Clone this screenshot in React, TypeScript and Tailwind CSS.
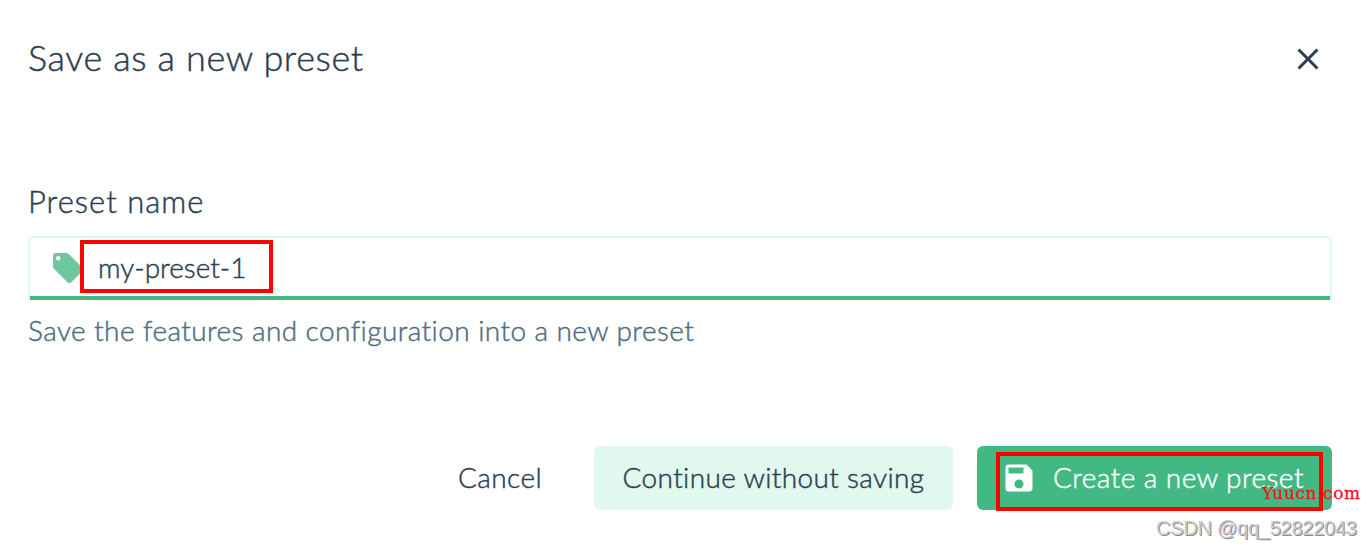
import React from "react";
import { MdClose, MdLocalOffer, MdSave } from "react-icons/md";

const App: React.FC = () => {
  const [name, setName] = React.useState("my-preset-1");

  return (
    <div className="relative h-[548px] w-[1372px] overflow-hidden bg-white px-7 font-['Lato',sans-serif] text-[28px] font-light text-[#2c3e50] [-webkit-text-stroke-width:0.45px] [font-variant-ligatures:none]">
      {/* Header */}
      <header className="flex h-[118px] items-center justify-between pr-0.5">
        <h1 className="-mt-1 text-[36px] leading-[44px] tracking-[0.6px] whitespace-nowrap">Save as a new preset</h1>
        <button aria-label="Close" className="mr-4">
          <MdClose className="h-9 w-9" />
        </button>
      </header>

      {/* Preset name field */}
      <section className="mr-3 pt-[61px]">
        <label htmlFor="preset-name" className="block h-[57px] text-[31px] leading-[44px] tracking-[1px]">
          Preset name
        </label>
        <div className="relative flex h-16 items-center rounded-t-md border-2 border-b-0 border-[#dff8ef] pl-5">
          <MdLocalOffer className="-mt-0.5 h-9 w-9 shrink-0 text-[#6fc79d]" />
          <input
            id="preset-name"
            type="text"
            value={name}
            onChange={(e) => setName(e.target.value)}
            className="-mt-1 ml-3 h-14 w-full bg-transparent outline-none"
          />
          <div className="absolute inset-x-0 bottom-0 h-1 bg-[#42b983]"></div>
          <div className="absolute top-0.5 left-[50px] h-[53px] w-[193px] border-4 border-[#ff0000]"></div>
        </div>
        <p className="mt-[7px] h-[49px] leading-[46px] tracking-[0.42px] whitespace-nowrap text-[#4e6e80]">
          Save the features and configuration into a new preset
        </p>
      </section>

      {/* Actions */}
      <footer className="mt-[90px] mr-3 flex h-16 justify-end gap-6">
        <button className="px-7 pb-0.5 tracking-[0.4px] whitespace-nowrap">Cancel</button>
        <button className="w-[359px] rounded-md bg-[#e0f8ed] pb-0.5 tracking-[0.35px] whitespace-nowrap">
          Continue without saving
        </button>
        <button className="relative flex w-[355px] items-center rounded-md bg-[#42b983] pl-6 whitespace-nowrap text-white">
          <MdSave className="h-9 w-9 shrink-0" />
          <span className="ml-4 pb-0.5 tracking-[0.45px]">Create a new preset</span>
          <div className="absolute top-1.5 left-[19px] h-[59px] w-[327px] border-4 border-[#ff0000]"></div>
        </button>
      </footer>

      {/* Watermarks */}
      <span className="absolute top-[481px] left-[1262px] font-['DejaVu_Serif',serif] text-[17px] leading-6 font-normal tracking-[0.6px] text-[#f5101c] [-webkit-text-stroke-width:0.3px]">
        Yuucn.com
      </span>
      <span className="absolute top-[516px] left-[1156px] font-['Liberation_Sans',sans-serif] text-[20px] leading-6 font-normal tracking-[-0.25px] whitespace-nowrap text-[#cacaca] [-webkit-text-stroke-width:0] [text-shadow:1px_1px_0_#8c8c8c]">
        CSDN @qq_52822043
      </span>
    </div>
  );
};

export default App;
